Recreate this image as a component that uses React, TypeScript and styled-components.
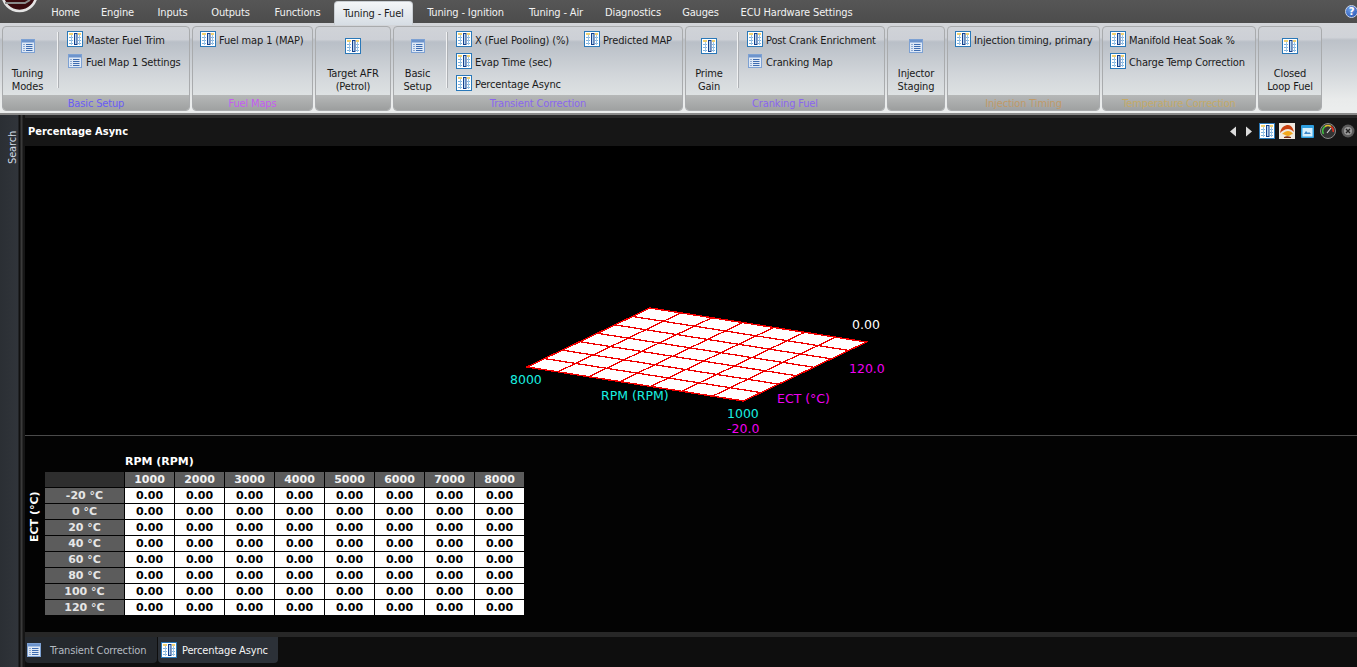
import React from "react"
import styled, { createGlobalStyle } from "styled-components"

const GlobalStyle = createGlobalStyle`
  html, body {
    margin: 0;
    padding: 0;
    background: #000;
    overflow: hidden;
  }
  * {
    box-sizing: border-box;
  }
`

const UI_FONT = `"DejaVu Sans Condensed", "Noto Sans", "Liberation Sans", sans-serif`
const DATA_FONT = `"DejaVu Sans", Verdana, sans-serif`

const Page = styled.div`
  width: 1357px;
  height: 667px;
  display: flex;
  flex-direction: column;
  overflow: hidden;
  position: relative;
  font-family: ${UI_FONT};
  font-size: 11px;
  letter-spacing: -0.15px;
`
const TopBar = styled.div`
  height: 23px;
  background: linear-gradient(#565656, #4c4c4c);
  display: flex;
  padding-left: 41px;
  flex-shrink: 0;
`
const TopTab = styled.div<{ $w: number; $active?: boolean }>`
  width: ${(p) => p.$w}px;
  height: ${(p) => (p.$active ? 24 : 23)}px;
  margin-top: 1px;
  line-height: 24px;
  text-align: center;
  white-space: nowrap;
  color: ${(p) => (p.$active ? "#1c1c1c" : "#f2f2f2")};
  background: ${(p) => (p.$active ? "linear-gradient(#f4f6f8, #d6dde4)" : "transparent")};
  border-radius: ${(p) => (p.$active ? "4px 4px 0 0" : "0")};
  border: ${(p) => (p.$active ? "1px solid #c9ced3" : "none")};
  border-bottom: none;
  position: relative;
  z-index: 1;
`
const Logo = styled.svg`
  position: absolute;
  left: 0;
  top: 0;
`
const HelpButton = styled.div`
  position: absolute;
  left: 1345px;
  top: 5px;
  width: 13px;
  height: 13px;
  border-radius: 50%;
  background: radial-gradient(circle at 40% 30%, #6f9fe8, #1f4fb0);
  border: 1px solid #c8d4ea;
  color: #fff;
  font: bold 10px/11px ${DATA_FONT};
  text-align: center;
`
const Ribbon = styled.div`
  height: 90px;
  flex-shrink: 0;
  display: flex;
  gap: 2px;
  padding: 3px 0 2px 2px;
  background: linear-gradient(#d3d5d9 0%, #d0d3d8 16%, #bcc1c8 19%, #d3d7db 55%, #e9ebeb 85%, #eceeee 100%);
`
const Group = styled.div<{ $w: number }>`
  width: ${(p) => p.$w}px;
  height: 85px;
  border: 1px solid #a9abad;
  border-radius: 4px;
  display: flex;
  flex-direction: column;
  overflow: hidden;
  background: linear-gradient(#d0d3d8 0%, #cdd0d6 15%, #b9bfc7 18%, #d2d6da 58%, #e6eae9 100%);
`
const GroupBody = styled.div`
  height: 68px;
  display: flex;
  flex-shrink: 0;
`
const GroupLabel = styled.div<{ $color: string }>`
  flex: 1;
  background: linear-gradient(#b6b8b8, #9c9e9e);
  color: ${(p) => p.$color};
  text-align: center;
  line-height: 17px;
  white-space: nowrap;
`
const BigButton = styled.div<{ $w?: number }>`
  width: ${(p) => (p.$w ? `${p.$w}px` : "100%")};
  flex-shrink: 0;
  display: flex;
  flex-direction: column;
  align-items: center;
  padding-top: 11px;
  color: #1a1a1a;
  text-align: center;
  line-height: 13px;
`
const BigIconSlot = styled.div`
  height: 16px;
  display: flex;
  align-items: center;
`
const BigLabel = styled.div`
  margin-top: 13px;
  white-space: nowrap;
`
const Separator = styled.div`
  width: 1px;
  height: 56px;
  margin: 5px 0 0 5px;
  background: #f1f2f3;
  box-shadow: 1px 0 0 #aeb1b5;
  flex-shrink: 0;
`
const ItemColumn = styled.div<{ $w?: number; $first?: boolean }>`
  ${(p) => (p.$w ? `width: ${p.$w}px;` : "")}
  display: flex;
  flex-direction: column;
  padding: 1px 0 0 ${(p) => (p.$first ? 9 : 0)}px;
  flex-shrink: 0;
`
const ItemColumns = styled.div<{ $left: number }>`
  display: flex;
  padding-left: ${(p) => p.$left}px;
`
const Item = styled.div`
  height: 22px;
  display: flex;
  align-items: center;
  gap: 3px;
  color: #1a1a1a;
  white-space: nowrap;
`
const ItemIconSlot = styled.div`
  width: 16px;
  display: flex;
  align-items: center;
  justify-content: center;
`
const ItemText = styled.span`
  position: relative;
  top: 1px;
`
const Body = styled.div`
  flex: 1;
  display: flex;
  min-height: 0;
  background: #000;
`
const Rail = styled.div`
  width: 25px;
  flex-shrink: 0;
  background: linear-gradient(90deg, #2b2f34 0, #30343a 18px, #101010 19px, #101010 20px, #3a3a3a 21px, #3a3a3a 22px, #161616 23px);
  border-top: 2px solid #8a8a8a;
`
const RailLabel = styled.div`
  width: 25px;
  margin-top: 13px;
  height: 36px;
  writing-mode: vertical-rl;
  transform: rotate(180deg);
  text-align: left;
  line-height: 25px;
  color: #cfdbe6;
  font-size: 11px;
`
const Main = styled.div`
  flex: 1;
  display: flex;
  flex-direction: column;
  min-width: 0;
  border-top: 2px solid #8a8a8a;
`
const TitleBar = styled.div`
  height: 31px;
  flex-shrink: 0;
  display: flex;
  align-items: center;
  background: #161616;
  border-top: 3px solid #2a2a2a;
  padding-left: 3px;
  color: #fff;
  font-weight: 700;
`
const TitleText = styled.div`
  font-size: 11px;
  margin-top: -2px;
  letter-spacing: 0;
`
const TitleTools = styled.div`
  margin-left: auto;
  display: flex;
  align-items: center;
  height: 100%;
  margin-top: -2px;
`
const ToolSlot = styled.div<{ $w: number }>`
  width: ${(p) => p.$w}px;
  display: flex;
  justify-content: center;
`
const ChartArea = styled.div`
  height: 290px;
  flex-shrink: 0;
  background: #000;
  border-bottom: 1px solid #4a4a4a;
`
const ChartSvg = styled.svg`
  display: block;
  font-family: ${DATA_FONT};
  font-size: 12.5px;
  letter-spacing: 0;
`
const TableArea = styled.div`
  height: 196px;
  flex-shrink: 0;
  background: #030303;
  padding-top: 19px;
  display: flex;
  flex-direction: column;
  font-family: ${DATA_FONT};
  font-weight: 700;
  font-size: 11px;
  letter-spacing: 0;
  color: #fff;
`
const XAxisTitle = styled.div`
  margin-left: 100px;
  line-height: 14px;
  height: 17px;
`
const TableRow = styled.div`
  display: flex;
`
const YAxisTitle = styled.div`
  width: 20px;
  flex-shrink: 0;
  height: 70px;
  margin-top: 19px;
  writing-mode: vertical-rl;
  transform: rotate(180deg);
  text-align: right;
  line-height: 19px;
`
const DataGrid = styled.div`
  display: grid;
  grid-template-columns: 79px repeat(8, 49px);
  grid-auto-rows: 15px;
  gap: 1px;
`
const Cell = styled.div<{ $kind: "corner" | "column" | "row" | "value" }>`
  text-align: center;
  line-height: 15px;
  background: ${(p) =>
    p.$kind === "corner" ? "#2e2e2e" : p.$kind === "value" ? "#fff" : "#5c5c5c"};
  color: ${(p) => (p.$kind === "value" ? "#000" : p.$kind === "row" ? "#e6e6e6" : "#f2f2f2")};
`
const BottomStrip = styled.div`
  flex: 1;
  display: flex;
  align-items: flex-start;
  background: #0e0e0e;
  border-top: 5px solid #272727;
`
const DocTab = styled.div<{ $w: number; $active?: boolean }>`
  width: ${(p) => p.$w}px;
  height: 26px;
  display: flex;
  align-items: center;
  gap: ${(p) => (p.$active ? 5 : 9)}px;
  padding-left: ${(p) => (p.$active ? 3 : 2)}px;
  margin-right: 1px;
  background: ${(p) => (p.$active ? "#2c3138" : "#24282d")};
  color: ${(p) => (p.$active ? "#f4f4f4" : "#b4bac0")};
  border-radius: 0 0 4px 4px;
  white-space: nowrap;
`

const TableIcon = ({ size = 16 }: { size?: number }) => (
  <svg width={size} height={size} viewBox="0 0 16 16" style={{ flexShrink: 0 }}>
    <rect x="0.5" y="0.5" width="15" height="15" fill="#fff" stroke="#2a78b8" />
    <rect x="2" y="2" width="4" height="2" fill="#f0d070" />
    <rect x="11" y="2" width="3" height="2" fill="#f0d070" />
    <path d="M2 6.5h4M2 9.5h4M2 12.5h4M11 6.5h3M11 9.5h3M11 12.5h3" stroke="#7fb2de" strokeWidth="1" />
    <path d="M4.5 4v10M12.5 4v10" stroke="#9cc6e6" strokeWidth="1" />
    <rect x="7.5" y="2.5" width="2.5" height="11" fill="#bcd8f0" stroke="#123f8c" />
  </svg>
)

const ListIcon = ({ size = 14 }: { size?: number }) => (
  <svg width={size} height={size} viewBox="0 0 14 14" style={{ flexShrink: 0 }}>
    <rect x="0" y="0" width="14" height="14" rx="0.5" fill="#dfe9f6" stroke="none" />
    <rect x="0" y="0" width="14" height="3.5" fill="#6d94cc" />
    <rect x="0.5" y="0.5" width="13" height="13" fill="none" stroke="#7da1d3" />
    <path d="M2.5 5.5h1M5 5.5h6.5M2.5 7.5h1M5 7.5h6.5M2.5 9.5h1M5 9.5h6.5M2.5 11.5h1M5 11.5h6.5" stroke="#3e6cb0" strokeWidth="1" />
  </svg>
)

const FlameIcon = () => (
  <svg width="16" height="16" viewBox="0 0 16 16" style={{ flexShrink: 0 }}>
    <rect width="16" height="16" fill="#efe9df" />
    <path d="M1 10C2 4 6 2 9 2c3 0 5 3 6 7-2-2-4-3-6-3-3 0-6 2-8 4z" fill="#c8400f" />
    <path d="M3 11c2-2 4-3 6-3 2 0 4 1 5 3-2 0-3 2-5 2s-4-2-6-2z" fill="#f2a81d" />
    <path d="M5 14c2-1 4-1 7 0v1H5z" fill="#7c2c10" />
  </svg>
)

const WindowIcon = () => (
  <svg width="13" height="13" viewBox="0 0 13 13" style={{ flexShrink: 0 }}>
    <rect width="13" height="13" rx="1" fill="#2f9fe0" />
    <rect x="1.5" y="3" width="10" height="8.5" fill="#d7effb" />
    <path d="M3 9l2-3 2 2 1-1 2 2z" fill="#3a86c8" />
  </svg>
)

const GaugeIcon = () => (
  <svg width="16" height="16" viewBox="0 0 16 16" style={{ flexShrink: 0 }}>
    <circle cx="8" cy="8" r="7.5" fill="#333" stroke="#8a8a8a" />
    <path d="M3.5 11A5.5 5.5 0 0 1 5 3.5" fill="none" stroke="#3fbf3f" strokeWidth="1.6" />
    <path d="M5 3.5A5.5 5.5 0 0 1 11 3.5" fill="none" stroke="#e0c030" strokeWidth="1.6" />
    <path d="M11 3.5A5.5 5.5 0 0 1 13.2 9" fill="none" stroke="#d83020" strokeWidth="1.6" />
    <path d="M7 10L11 5" stroke="#ddd" strokeWidth="1.2" />
  </svg>
)

const CloseIcon = () => (
  <svg width="14" height="14" viewBox="0 0 14 14" style={{ flexShrink: 0 }}>
    <circle cx="7" cy="7" r="6.5" fill="#5c5c5c" />
    <circle cx="7" cy="7" r="4" fill="#9a9a9a" />
    <path d="M5 5l4 4M9 5l-4 4" stroke="#222" strokeWidth="1.4" />
  </svg>
)

const ArrowIcon = ({ flip }: { flip?: boolean }) => (
  <svg width="8" height="11" viewBox="0 0 8 11" style={{ flexShrink: 0 }}>
    <path d={flip ? "M1 0.5L7 5.5L1 10.5z" : "M7 0.5L1 5.5L7 10.5z"} fill="#dcdcdc" />
  </svg>
)

type IconKind = "table" | "list"
const RibbonIcon = ({ kind }: { kind: IconKind }) => (kind === "table" ? <TableIcon /> : <ListIcon />)

const tabs = [
  { label: "Home", w: 49 },
  { label: "Engine", w: 55 },
  { label: "Inputs", w: 55 },
  { label: "Outputs", w: 61 },
  { label: "Functions", w: 73 },
  { label: "Tuning - Fuel", w: 79, active: true },
  { label: "Tuning - Ignition", w: 105 },
  { label: "Tuning - Air", w: 76 },
  { label: "Diagnostics", w: 78 },
  { label: "Gauges", w: 57 },
  { label: "ECU Hardware Settings", w: 135 }
]

const Big = ({ kind, lines, w }: { kind: IconKind; lines: string[]; w?: number }) => (
  <BigButton $w={w}>
    <BigIconSlot>
      <RibbonIcon kind={kind} />
    </BigIconSlot>
    <BigLabel>
      {lines.map((l) => (
        <div key={l}>{l}</div>
      ))}
    </BigLabel>
  </BigButton>
)

const Items = ({ rows, w, first }: { rows: [IconKind, string][]; w?: number; first?: boolean }) => (
  <ItemColumn $w={w} $first={first}>
    {rows.map(([kind, label]) => (
      <Item key={label}>
        <ItemIconSlot>
          <RibbonIcon kind={kind} />
        </ItemIconSlot>
        <ItemText>{label}</ItemText>
      </Item>
    ))}
  </ItemColumn>
)

const rpm = [1000, 2000, 3000, 4000, 5000, 6000, 7000, 8000]
const ect = [-20, 0, 20, 40, 60, 80, 100, 120]

// plot corners in page coordinates
const left = [527, 367]
const right = [866.5, 342]
const front = [743.5, 401]
const back = [650, 308]

const mix = (a: number[], b: number[], t: number) => [a[0] + (b[0] - a[0]) * t, a[1] + (b[1] - a[1]) * t]

const Surface = () => (
  <ChartSvg width="1332" height="289" viewBox="25 146 1332 289">
    <polygon
      points={[left, front, right, back].map((p) => p.join(",")).join(" ")}
      fill="#fff"
      stroke="#f00000"
      strokeWidth="1.4"
      shapeRendering="crispEdges"
    />
    {[1, 2, 3, 4, 5, 6].map((i) => {
      const a1 = mix(left, front, i / 7)
      const a2 = mix(back, right, i / 7)
      const b1 = mix(front, right, i / 7)
      const b2 = mix(left, back, i / 7)
      return (
        <g key={i} stroke="#f00000" strokeWidth="1.3" shapeRendering="crispEdges">
          <line x1={a1[0]} y1={a1[1]} x2={a2[0]} y2={a2[1]} />
          <line x1={b1[0]} y1={b1[1]} x2={b2[0]} y2={b2[1]} />
        </g>
      )
    })}
    <text x="852" y="329" fill="#fff">0.00</text>
    <text x="510" y="384" fill="#19f0e0">8000</text>
    <text x="601" y="400" fill="#19f0e0">RPM (RPM)</text>
    <text x="727" y="418" fill="#19f0e0">1000</text>
    <text x="727" y="433" fill="#f000f0">-20.0</text>
    <text x="777" y="403" fill="#f000f0">ECT (°C)</text>
    <text x="849" y="373" fill="#f000f0">120.0</text>
  </ChartSvg>
)

const App = () => {
  return (
    <Page>
      <GlobalStyle />
      <TopBar>
        {tabs.map((t) => (
          <TopTab key={t.label} $w={t.w} $active={t.active}>
            {t.label}
          </TopTab>
        ))}
      </TopBar>
      <Logo width="40" height="14" viewBox="0 0 40 14">
        <circle cx="19.5" cy="-6" r="17" fill="#3a0a0e" stroke="#e4e4e4" strokeWidth="2.6" />
        <path d="M5 3h20l5-3" fill="none" stroke="#8a8a8a" strokeWidth="2" />
      </Logo>
      <HelpButton>?</HelpButton>
      <Ribbon>
        <Group $w={188}>
          <GroupBody>
            <Big kind="list" lines={["Tuning", "Modes"]} w={49} />
            <Separator />
            <Items first rows={[["table", "Master Fuel Trim"], ["list", "Fuel Map 1 Settings"]]} />
          </GroupBody>
          <GroupLabel $color="#6a5cf5">Basic Setup</GroupLabel>
        </Group>
        <Group $w={121}>
          <GroupBody>
            <ItemColumns $left={7}>
              <Items rows={[["table", "Fuel map 1 (MAP)"]]} />
            </ItemColumns>
          </GroupBody>
          <GroupLabel $color="#c45cf0">Fuel Maps</GroupLabel>
        </Group>
        <Group $w={76}>
          <GroupBody>
            <Big kind="table" lines={["Target AFR", "(Petrol)"]} />
          </GroupBody>
          <GroupLabel $color="#888" />
        </Group>
        <Group $w={290}>
          <GroupBody>
            <Big kind="list" lines={["Basic", "Setup"]} w={47} />
            <Separator />
            <Items first w={137} rows={[["table", "X (Fuel Pooling) (%)"], ["table", "Evap Time (sec)"], ["table", "Percentage Async"]]} />
            <Items rows={[["table", "Predicted MAP"]]} />
          </GroupBody>
          <GroupLabel $color="#8a66ee">Transient Correction</GroupLabel>
        </Group>
        <Group $w={200}>
          <GroupBody>
            <Big kind="table" lines={["Prime", "Gain"]} w={46} />
            <Separator />
            <Items first rows={[["table", "Post Crank Enrichment"], ["list", "Cranking Map"]]} />
          </GroupBody>
          <GroupLabel $color="#8a66ee">Cranking Fuel</GroupLabel>
        </Group>
        <Group $w={58}>
          <GroupBody>
            <Big kind="list" lines={["Injector", "Staging"]} />
          </GroupBody>
          <GroupLabel $color="#888" />
        </Group>
        <Group $w={153}>
          <GroupBody>
            <ItemColumns $left={7}>
              <Items rows={[["table", "Injection timing, primary"]]} />
            </ItemColumns>
          </GroupBody>
          <GroupLabel $color="#c09a68">Injection Timing</GroupLabel>
        </Group>
        <Group $w={154}>
          <GroupBody>
            <ItemColumns $left={7}>
              <Items rows={[["table", "Manifold Heat Soak %"], ["table", "Charge Temp Correction"]]} />
            </ItemColumns>
          </GroupBody>
          <GroupLabel $color="#c4aa68">Temperature Correction</GroupLabel>
        </Group>
        <Group $w={64}>
          <GroupBody>
            <Big kind="table" lines={["Closed", "Loop Fuel"]} />
          </GroupBody>
          <GroupLabel $color="#888" />
        </Group>
      </Ribbon>
      <Body>
        <Rail>
          <RailLabel>Search</RailLabel>
        </Rail>
        <Main>
          <TitleBar>
            <TitleText>Percentage Async</TitleText>
            <TitleTools>
              <ToolSlot $w={16}><ArrowIcon /></ToolSlot>
              <ToolSlot $w={16}><ArrowIcon flip /></ToolSlot>
              <ToolSlot $w={20}><TableIcon /></ToolSlot>
              <ToolSlot $w={20}><FlameIcon /></ToolSlot>
              <ToolSlot $w={20}><WindowIcon /></ToolSlot>
              <ToolSlot $w={22}><GaugeIcon /></ToolSlot>
              <ToolSlot $w={18}><CloseIcon /></ToolSlot>
            </TitleTools>
          </TitleBar>
          <ChartArea>
            <Surface />
          </ChartArea>
          <TableArea>
            <XAxisTitle>RPM (RPM)</XAxisTitle>
            <TableRow>
              <YAxisTitle>ECT (°C)</YAxisTitle>
              <DataGrid>
                <Cell $kind="corner" />
                {rpm.map((r) => (
                  <Cell key={r} $kind="column">{r}</Cell>
                ))}
                {ect.map((e) => (
                  <React.Fragment key={e}>
                    <Cell $kind="row">{e} °C</Cell>
                    {rpm.map((r) => (
                      <Cell key={r} $kind="value">0.00</Cell>
                    ))}
                  </React.Fragment>
                ))}
              </DataGrid>
            </TableRow>
          </TableArea>
          <BottomStrip>
            <DocTab $w={132}>
              <ListIcon />
              Transient Correction
            </DocTab>
            <DocTab $w={120} $active>
              <TableIcon />
              Percentage Async
            </DocTab>
          </BottomStrip>
        </Main>
      </Body>
    </Page>
  )
}
export default App
